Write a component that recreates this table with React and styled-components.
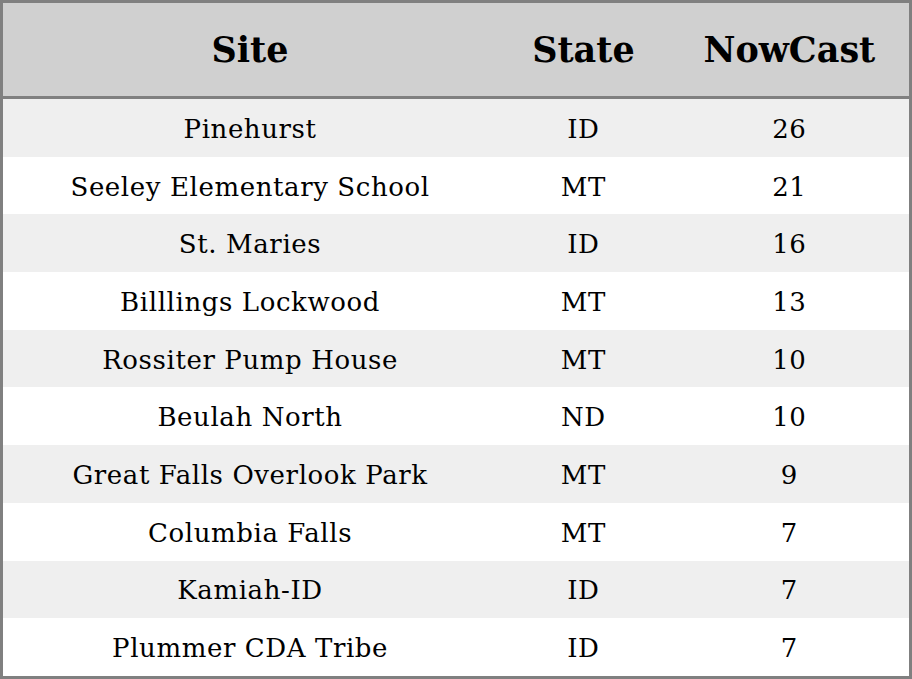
import styled, { createGlobalStyle } from "styled-components";

const rows = [
  { site: "Pinehurst", state: "ID", nowcast: 26 },
  { site: "Seeley Elementary School", state: "MT", nowcast: 21 },
  { site: "St. Maries", state: "ID", nowcast: 16 },
  { site: "Billlings Lockwood", state: "MT", nowcast: 13 },
  { site: "Rossiter Pump House", state: "MT", nowcast: 10 },
  { site: "Beulah North", state: "ND", nowcast: 10 },
  { site: "Great Falls Overlook Park", state: "MT", nowcast: 9 },
  { site: "Columbia Falls", state: "MT", nowcast: 7 },
  { site: "Kamiah-ID", state: "ID", nowcast: 7 },
  { site: "Plummer CDA Tribe", state: "ID", nowcast: 7 },
];

export default function App() {
  return (
    <>
      <GlobalStyle />
      <StyledTable>
        <colgroup>
          <StyledCol $width={494} />
          <StyledCol $width={172} />
          <StyledCol $width={240} />
        </colgroup>
        <thead>
          <tr>
            <StyledHead>Site</StyledHead>
            <StyledHead>State</StyledHead>
            <StyledHead>NowCast</StyledHead>
          </tr>
        </thead>
        <tbody>
          {rows.map((row, index) => (
            <StyledRow key={row.site} $striped={index % 2 === 0}>
              <StyledCell>{row.site}</StyledCell>
              <StyledCell>{row.state}</StyledCell>
              <StyledCell>{row.nowcast}</StyledCell>
            </StyledRow>
          ))}
        </tbody>
      </StyledTable>
    </>
  );
}

const GlobalStyle = createGlobalStyle`
  html, body {
    margin: 0;
    padding: 0;
    background: #ffffff;
  }
`;

const StyledTable = styled.table`
  box-sizing: border-box;
  width: 912px;
  height: 679px;
  border-collapse: collapse;
  border: 3px solid #808080;
  table-layout: fixed;
  font-family: "DejaVu Serif", serif;
  color: #000000;
`;

const StyledCol = styled.col`
  width: ${({ $width }) => $width}px;
`;

const StyledHead = styled.th`
  height: 93px;
  padding: 0;
  background: #d0d0d0;
  border-bottom: 3px solid #808080;
  font-size: 35px;
  font-weight: bold;
  text-align: center;
`;

const StyledRow = styled.tr`
  background: ${({ $striped }) => ($striped ? "#efefef" : "#ffffff")};
`;

const StyledCell = styled.td`
  height: 55px;
  padding: 2px 0 0 0;
  font-size: 26px;
  letter-spacing: 0.6px;
  text-align: center;
`;
